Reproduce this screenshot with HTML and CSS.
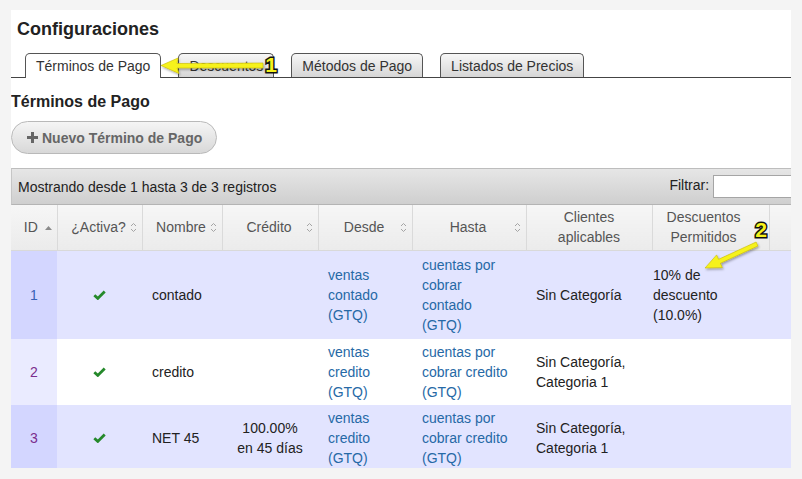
FILE: index.html
```html
<!DOCTYPE html>
<html lang="es">
<head>
    <meta charset="UTF-8">
    <title>Configuraciones</title>
    <link rel="stylesheet" href="styles.css">
</head>
<body>
<div class="page">
    <div class="panel">
        <h1 class="title">Configuraciones</h1>

        <!-- Tabs -->
        <ul class="tabs">
            <li class="tab active">Términos de Pago</li>
            <li class="tab">Descuentos</li>
            <li class="tab">Métodos de Pago</li>
            <li class="tab">Listados de Precios</li>
        </ul>

        <h2 class="section-title">Términos de Pago</h2>
        <button class="btn-new">
            <svg class="plus" width="11" height="11" viewBox="0 0 11 11"><rect x="4" y="0" width="3" height="11"/><rect x="0" y="4" width="11" height="3"/></svg>
            Nuevo Término de Pago
        </button>

        <!-- Table -->
        <div class="grid">
            <div class="toolbar">
                <span>Mostrando desde 1 hasta 3 de 3 registros</span>
                <label class="filter">Filtrar: <input type="text"></label>
            </div>
            <table>
                <colgroup>
                    <col style="width:46px"><col style="width:85px"><col style="width:80px">
                    <col style="width:96px"><col style="width:94px"><col style="width:114px">
                    <col style="width:126px"><col style="width:117px"><col style="width:51px">
                </colgroup>
                <thead>
                    <tr>
                        <th class="th-id"><div class="th-in"><span>ID</span><svg class="asc" width="7" height="5" viewBox="0 0 7 5"><polygon points="0,5 3.5,1 7,5"/></svg></div></th>
                        <th><div class="th-in"><span>¿Activa?</span><svg class="sort" width="7" height="11" viewBox="0 0 7 11"><path d="M1 4 L3.5 1.5 L6 4 M1 7 L3.5 9.5 L6 7"/></svg></div></th>
                        <th><div class="th-in"><span>Nombre</span><svg class="sort" width="7" height="11" viewBox="0 0 7 11"><path d="M1 4 L3.5 1.5 L6 4 M1 7 L3.5 9.5 L6 7"/></svg></div></th>
                        <th><div class="th-in"><span>Crédito</span><svg class="sort" width="7" height="11" viewBox="0 0 7 11"><path d="M1 4 L3.5 1.5 L6 4 M1 7 L3.5 9.5 L6 7"/></svg></div></th>
                        <th><div class="th-in"><span>Desde</span><svg class="sort" width="7" height="11" viewBox="0 0 7 11"><path d="M1 4 L3.5 1.5 L6 4 M1 7 L3.5 9.5 L6 7"/></svg></div></th>
                        <th><div class="th-in"><span>Hasta</span><svg class="sort" width="7" height="11" viewBox="0 0 7 11"><path d="M1 4 L3.5 1.5 L6 4 M1 7 L3.5 9.5 L6 7"/></svg></div></th>
                        <th class="plain">Clientes aplicables</th>
                        <th class="plain wide">Descuentos Permitidos</th>
                        <th class="plain"></th>
                    </tr>
                </thead>
                <tbody>
                    <tr class="odd tall">
                        <td class="id"><a class="new" href="#">1</a></td>
                        <td class="center"><svg class="check" width="13" height="10" viewBox="0 0 13 10"><path d="M1.3 5.2 L4.8 8.4 L11.7 1.4"/></svg></td>
                        <td>contado</td>
                        <td class="credit"></td>
                        <td><a href="#">ventas contado (GTQ)</a></td>
                        <td class="hasta"><a href="#">cuentas por cobrar contado (GTQ)</a></td>
                        <td>Sin Categoría</td>
                        <td class="disc">10% de descuento (10.0%)</td>
                        <td></td>
                    </tr>
                    <tr class="even">
                        <td class="id"><a class="seen" href="#">2</a></td>
                        <td class="center"><svg class="check" width="13" height="10" viewBox="0 0 13 10"><path d="M1.3 5.2 L4.8 8.4 L11.7 1.4"/></svg></td>
                        <td>credito</td>
                        <td class="credit"></td>
                        <td><a href="#">ventas credito (GTQ)</a></td>
                        <td class="hasta"><a href="#">cuentas por cobrar credito (GTQ)</a></td>
                        <td>Sin Categoría, Categoria 1</td>
                        <td class="disc"></td>
                        <td></td>
                    </tr>
                    <tr class="odd">
                        <td class="id"><a class="seen" href="#">3</a></td>
                        <td class="center"><svg class="check" width="13" height="10" viewBox="0 0 13 10"><path d="M1.3 5.2 L4.8 8.4 L11.7 1.4"/></svg></td>
                        <td>NET 45</td>
                        <td class="credit">100.00% en 45 días</td>
                        <td><a href="#">ventas credito (GTQ)</a></td>
                        <td class="hasta"><a href="#">cuentas por cobrar credito (GTQ)</a></td>
                        <td>Sin Categoría, Categoria 1</td>
                        <td class="disc"></td>
                        <td></td>
                    </tr>
                </tbody>
            </table>
        </div>
    </div>

    <!-- Annotation arrows -->
    <svg class="marks" width="802" height="479" viewBox="0 0 802 479">
        <defs>
            <filter id="shade" x="-20%" y="-50%" width="140%" height="200%">
                <feDropShadow dx="1" dy="1.5" stdDeviation="1" flood-color="#000" flood-opacity="0.35"/>
            </filter>
        </defs>
        <polygon class="arrow" filter="url(#shade)" points="161,65.5 178,58 177,63.5 263,63 263,68 177,68 179,73.5"/>
        <text class="num" x="271" y="72">1</text>
        <polygon class="arrow" filter="url(#shade)" points="705,268 716.6,254.9 718.6,259.3 756.1,242 757.9,246 720.4,263.3 722.4,267.6"/>
        <text class="num" x="761" y="237">2</text>
    </svg>
</div>
</body>
</html>
```

FILE: styles.css
```css
/* Global */
* {
    box-sizing: border-box;
}

body {
    margin: 0;
    background-color: #f4f4f4;
    font-family: "Liberation Sans", Arial, sans-serif;
    color: #222;
}

.page {
    position: relative;
    width: 802px;
    height: 479px;
    overflow: hidden;
}

.panel {
    margin: 10px 0 0 11px;
    width: 780px;
    height: 458px;
    padding-top: 8px;
    background-color: #fff;
    overflow: hidden;
}

.title {
    margin: 0 0 0 6px;
    font-size: 18px;
    line-height: 22px;
    font-weight: bold;
}

/* Tabs */
.tabs {
    list-style: none;
    margin: 13px 0 0;
    padding: 0 0 0 14px;
    display: flex;
    gap: 17px;
    height: 25px;
    border-bottom: 1px solid #444;
}

.tab {
    height: 24px;
    padding: 3px 10px 0;
    font-size: 14px;
    line-height: 18px;
    color: #333;
    border: 1px solid #555;
    border-bottom: none;
    border-radius: 5px 5px 0 0;
    background: linear-gradient(#f7f7f7, #d6d6d6);
}

.tab.active {
    height: 25px;
    background: #fff;
}

.section-title {
    margin: 14px 0 0;
    font-size: 16px;
    line-height: 20px;
    font-weight: bold;
}

/* Button */
.btn-new {
    display: flex;
    align-items: center;
    gap: 4px;
    margin-top: 9px;
    height: 33px;
    padding: 0 14px 0 15px;
    border: 1px solid #b9b9b9;
    border-radius: 17px;
    background: linear-gradient(#f5f5f5, #d8d8d8);
    font-family: inherit;
    font-size: 14px;
    font-weight: bold;
    color: #666;
}

.btn-new .plus {
    fill: #666;
}

/* Table */
.grid {
    margin-top: 14px;
    width: 809px;
}

.toolbar {
    display: flex;
    justify-content: space-between;
    align-items: center;
    height: 37px;
    padding: 0 6px;
    font-size: 14px;
    color: #222;
    border-top: 1px solid #bdbdbd;
    border-left: 1px solid #c6c6c6;
    border-bottom: 1px solid #b4b4b4;
    background: linear-gradient(#e6e6e6, #cfcfcf);
}

.filter input {
    width: 101px;
    height: 23px;
    border: 1px solid #a5a5a5;
    background: #fff;
    vertical-align: middle;
    font-family: inherit;
}

table {
    width: 809px;
    table-layout: fixed;
    border-collapse: collapse;
    font-size: 14px;
    line-height: 20px;
}

th {
    height: 45px;
    padding: 2px 5px 2px 10px;
    font-weight: normal;
    color: #555;
    border-left: 1px solid #dadada;
    border-bottom: 1px solid #d9d9d9;
    background: linear-gradient(#f6f6f6, #ebebeb);
}

th:first-child {
    border-left: none;
}

th.th-id {
    padding-left: 6px;
}

th.plain {
    padding: 2px 8px;
    text-align: center;
}

th.wide {
    padding-right: 22px;
}

.th-in {
    display: flex;
    align-items: center;
}

.th-in span {
    flex: 1;
    text-align: center;
}

.sort path {
    fill: none;
    stroke: #a4a4a4;
    stroke-width: 1;
}

.asc {
    fill: #8a8a8a;
}

td {
    padding: 3px 10px;
    vertical-align: middle;
    color: #222;
}

tr.tall td {
    padding: 4px 10px;
}

tr.odd td {
    background-color: #e2e4ff;
}

tr.even td {
    background-color: #fff;
}

tr.odd td.id {
    background-color: #d3d6ff;
}

tr.even td.id {
    background-color: #eaebff;
}

td.id,
td.center {
    text-align: center;
}

td.credit,
tr.tall td.credit {
    text-align: center;
    padding: 3px 14px;
}

td.hasta,
tr.tall td.hasta {
    padding-right: 17px;
}

td.disc,
tr.tall td.disc {
    padding-left: 1px;
}

a {
    color: #2669a6;
    text-decoration: none;
}

a.new {
    color: #3a62b5;
}

a.seen {
    color: #7b2e8c;
}

.check path {
    fill: none;
    stroke: #25892b;
    stroke-width: 2.8;
}

/* Annotations */
.marks {
    position: absolute;
    top: 0;
    left: 0;
    pointer-events: none;
}

.arrow {
    fill: #f6f21c;
    stroke: #c9bb00;
    stroke-width: 0.6;
}

.num {
    font-family: "Liberation Sans", Arial, sans-serif;
    font-size: 21px;
    font-weight: bold;
    text-anchor: middle;
    fill: #f6f21c;
    stroke: #111;
    stroke-width: 3;
    paint-order: stroke;
}
```
